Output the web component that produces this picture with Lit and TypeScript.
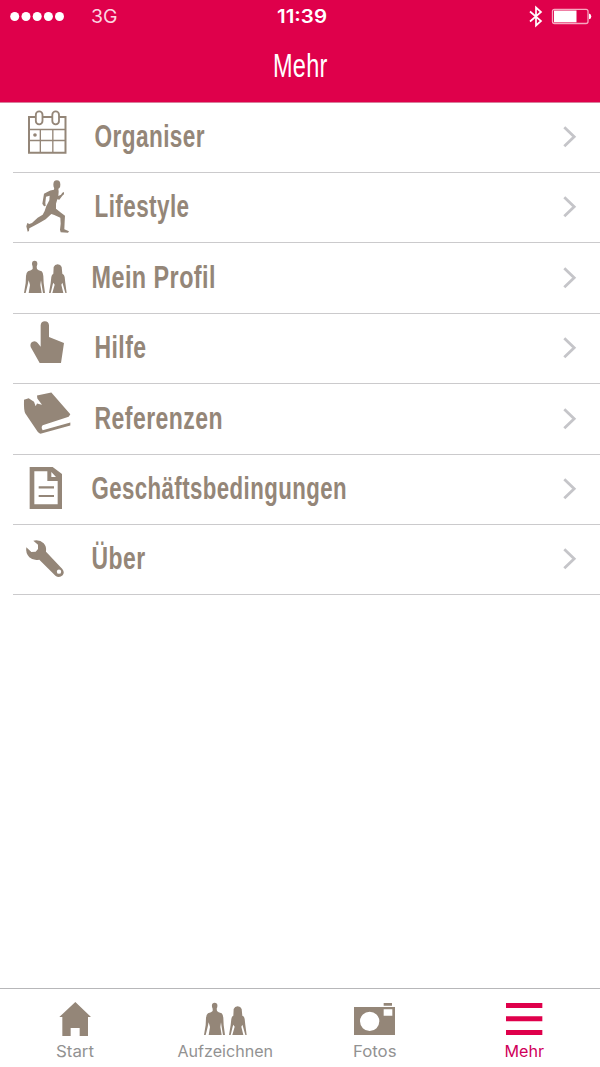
import { LitElement, html, svg, css } from "lit";
import { customElement } from "lit/decorators.js";

const people = svg`
  <path d="M97 58Q104 53 111 58Q114 65 110 73L111 80Q114 84 125 87Q129 90 130 101L131 122L135 152H129L125 128L123 114L121 128L125 152H86L90 128L86 114L83 128L77 152H72L77 122L78 101Q79 90 84 87Q95 84 98 80L98 73Q94 65 97 58Z"/>
  <path d="M161 74Q164 66 173 66Q182 66 185 74L187 94Q193 96 194 104L196 122L200 152H196L189 127L187 121L184 127L190 152H157L164 127L160 121L158 127L152 152H147L152 122L154 104Q155 96 160 94Z"/>`;

const icons: Record<string, unknown> = {
  calendar: svg`
    <path d="M87 51H196.500V158H87Z" fill="none" stroke="currentColor" stroke-width="6"/>
    <path d="M87 88.500H197M87 121.500H197M121 88V158M158.500 88V158" fill="none" stroke="currentColor" stroke-width="4"/>
    <rect x="107.500" y="34" width="20" height="39" rx="10" fill="#fff" stroke="currentColor" stroke-width="5.500"/>
    <rect x="157" y="34" width="20" height="39" rx="10" fill="#fff" stroke="currentColor" stroke-width="5.500"/>
    <circle cx="105" cy="105" r="5.500"/>`,
  runner: svg`
    <ellipse cx="170.500" cy="255" rx="10.500" ry="13"/>
    <path d="M163 262L162 270Q150 271 142 277L132 282L129 300L127 312L132 320L137 319L136 309L138 291L149 288L148 302L139 319L134 334L128 345L113 354L96 370L88 373L82 370L79 380L83 396L87 394L88 386L101 379L119 369L137 359L154 343L163 346L181 354L182 372L180 390L182 398L204 399L207 395L193 389L194 366L195 348L183 339L168 327L168 312L172 299L178 300L187 288L192 284L192 277L187 279L183 285L175 289L176 276L175 266Z"/>`,
  people,
  hand: svg`<path d="M122 250Q123 238 134.500 238Q146 238 147 250V285L192 303L183 363H119L92 315Q89 303 98 299Q107 296 113 303L122 314Z"/>`,
  book: svg`
    <path d="M72 46L86 41L102 52L107 65L111 57L126 61L112 42L111 33L154 24L211 89L206 97L128 122Q122 128 128 137L211 114V123L124 147Q118 149 113 142L76 87Q71 79 72 46Z"/>`,
  document: svg`
    <path fill-rule="evenodd" d="M89 249H158L186 270V375H89ZM103 262V361H173V291H142V262ZM154 264V279H168Z"/>
    <path d="M116 310H162M116 336H162" stroke="currentColor" stroke-width="6.500"/>`,
  wrench: svg`
    <path fill-rule="evenodd" d="M100 213Q119 209 131 221Q140 230 138 246L187 298Q195 308 188 317Q178 326 167 319L118 270Q100 274 88 263Q76 250 79 233L94 247L107 246L114 238L114 225ZM177 299.500A6.500 6.500 0 1 0 177 312.500A6.500 6.500 0 1 0 177 299.500Z"/>`,
  house: svg`<path d="M226 51L273 96H264V153H239V129H212V153H187V96H178Z"/>`,
  camera: svg`
    <path fill-rule="evenodd" d="M162 66H285V150H162ZM209 80A29 29 0 1 0 209 138A29 29 0 1 0 209 80ZM251 73V92H277V73ZM251 54H276V62H251Z"/>`,
  menu: svg`<path d="M618 54H727V69H618ZM618 94H727V109H618ZM618 135H727V150H618Z"/>`,
};

interface Label {
  text: string;
  x: number;
  width: number;
}

const rows: (Label & { icon: string; top: number })[] = [
  { text: "Organiser", x: 94.5, width: 110.5, icon: "calendar", top: 6 },
  { text: "Lifestyle", x: 94.5, width: 95, icon: "runner", top: 217 },
  { text: "Mein Profil", x: 91.5, width: 124.5, icon: "people", top: 2 },
  { text: "Hilfe", x: 94.5, width: 52, icon: "hand", top: 213 },
  { text: "Referenzen", x: 94.5, width: 128.5, icon: "book", top: -1.5 },
  { text: "Geschäftsbedingungen", x: 91.5, width: 255.5, icon: "document", top: 210 },
  { text: "Über", x: 91.5, width: 54, icon: "wrench", top: 163 },
];

const tabs: (Label & { icon: string; box: string; active?: boolean })[] = [
  { text: "Start", x: 56, width: 38, icon: "house", box: "0 12 450 150" },
  { text: "Aufzeichnen", x: 27.5, width: 95.5, icon: "people", box: "-90 14 450 150" },
  { text: "Fotos", x: 53, width: 43.5, icon: "camera", box: "0 12 450 150" },
  { text: "Mehr", x: 54.5, width: 39.5, icon: "menu", box: "450 12 450 150", active: true },
];

@customElement("app-root")
export class AppRoot extends LitElement {
  static styles = css`
    :host {
      display: flex;
      flex-direction: column;
      height: 1067px;
      width: 600px;
      background: #fff;
      color: #948678;
      font-family: Inter, "Liberation Sans", sans-serif;
      overflow: hidden;
    }
    svg {
      display: block;
      fill: currentColor;
      flex: none;
    }
    header {
      height: 102px;
      background: #df004b;
      color: #fff;
      border-bottom: 1px solid #d8809c;
      margin-bottom: -1px;
      flex: none;
    }
    .carrier {
      font-size: 18.5px;
      fill: #fbd5e0;
    }
    .time {
      font-size: 18.5px;
      font-weight: 600;
    }
    .title {
      font: 33px "Liberation Sans", sans-serif;
      letter-spacing: 0.3px;
    }
    .list {
      list-style: none;
      margin: 0;
      padding: 0;
      flex: 1;
    }
    .content {
      display: flex;
      height: 70.38px;
    }
    .name {
      font: bold 32px "Liberation Sans", sans-serif;
      letter-spacing: 0.6px;
    }
    .separator {
      height: 1px;
      margin: -0.35px 0 -0.65px 13px;
      background: #cbcacc;
    }
    .chevron {
      fill: none;
      stroke: #c5c5c9;
      stroke-width: 2.8px;
    }
    nav {
      display: flex;
      height: 78px;
      border-top: 1px solid #b7b7b9;
      flex: none;
    }
    .tab {
      width: 150px;
    }
    .active {
      color: #df004b;
    }
    .caption {
      font-size: 16px;
      fill: #929292;
    }
    .active .caption {
      fill: #d0005a;
    }
  `;

  private label(l: Label, y: number, cls: string) {
    return svg`<text class=${cls} x=${l.x} y=${y} textLength=${l.width} lengthAdjust="spacingAndGlyphs">${l.text}</text>`;
  }

  render() {
    return html`
      <header>
        <svg width="600" height="33" viewBox="0 0 600 33">
          ${[14.7, 26, 37.2, 48.4, 59.5].map((x) => svg`<circle cx=${x} cy="16.500" r="4.500"/>`)}
          ${this.label({ text: "3G", x: 91, width: 26.5 }, 23.2, "carrier")}
          ${this.label({ text: "11:39", x: 277, width: 50 }, 23.2, "time")}
          <path d="M530 11.500L541 21L536 25.500V7.500L541 12L530 21.500" fill="none" stroke="#fff" stroke-width="1.700" />
          <rect x="552.500" y="9.300" width="35.500" height="14.200" rx="2" fill="none" stroke="#f6a9c0" stroke-width="1.300" />
          <path d="M554 10.500H576.500V22.300H554Z" />
          <path d="M589 13.500Q591.300 14 591.300 16.400Q591.300 18.800 589 19.300Z" />
        </svg>
        <svg width="600" height="69" viewBox="0 33 600 69">
          ${this.label({ text: "Mehr", x: 273, width: 54.5 }, 76.8, "title")}
        </svg>
      </header>
      <ul class="list">
        ${rows.map(
          (r) => html`<li>
            <div class="content">
              <svg width="90" height="70.380" viewBox="0 ${r.top} 270 211.140">${icons[r.icon]}</svg>
              <svg width="510" height="70.380" viewBox="90 0 510 70.380">
                ${this.label(r, 45, "name")}
                <path class="chevron" d="M564.300 25.200L574.200 34.700L564.300 44.200" />
              </svg>
            </div>
            <div class="separator"></div>
          </li>`
        )}
      </ul>
      <nav>
        ${tabs.map(
          (t) => html`<div class="tab ${t.active ? "active" : ""}">
            <svg width="150" height="50" viewBox=${t.box}>${icons[t.icon]}</svg>
            <svg width="150" height="28" viewBox="0 50 150 28">${this.label(t, 67.8, "caption")}</svg>
          </div>`
        )}
      </nav>
    `;
  }
}
